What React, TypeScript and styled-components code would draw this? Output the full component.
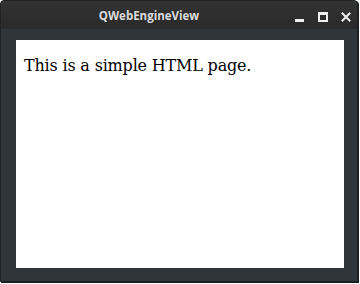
import React from 'react';
import styled, { createGlobalStyle } from 'styled-components';

const GlobalStyle = createGlobalStyle`
  html, body {
    margin: 0;
    padding: 0;
    background: #ffffff;
  }
`;

const Frame = styled.div`
  width: 360px;
  height: 284px;
  box-sizing: border-box;
  padding: 0 1px 1px 0;
  background: #ffffff;
`;

const Window = styled.div`
  width: 358px;
  height: 282px;
  box-sizing: border-box;
  display: flex;
  flex-direction: column;
  background: #2f3538;
  border: 1px solid #1f2224;
  border-radius: 4px 4px 0 0;
  box-shadow: 1px 1px 0 #1a1c1d;
  overflow: hidden;
`;

const TitleBar = styled.div`
  height: 27px;
  flex-shrink: 0;
  display: flex;
  align-items: center;
  background: linear-gradient(#333333, #2a2a2a);
  border-bottom: 1px solid #2b2e30;
  padding: 0 6px 0 0;
`;

const Title = styled.span`
  flex: 1;
  padding: 2px 0 0 2px;
  text-align: center;
  font-family: 'Open Sans', 'DejaVu Sans', sans-serif;
  font-weight: 700;
  font-size: 11.5px;
  color: #dcdcdc;
`;

const Controls = styled.div`
  display: flex;
  align-items: center;
  gap: 13px;
  margin-top: 4px;
`;

const ControlButton = styled.button`
  width: 10px;
  height: 10px;
  padding: 0;
  border: 0;
  background: none;
  display: flex;
  align-items: center;
  justify-content: center;
  color: #eeeeee;
`;

const Body = styled.div`
  flex: 1;
  display: flex;
  padding: 11px 13px 13px 15px;
`;

const WebView = styled.div`
  flex: 1;
  background: #ffffff;
  padding: 16px 8px 8px;
`;

const PageText = styled.p`
  margin: 0;
  font-family: 'DejaVu Serif', serif;
  font-size: 16px;
  line-height: 19px;
  letter-spacing: -0.18px;
  color: #000000;
`;

export default function App() {
  return (
    <>
      <GlobalStyle />
      <Frame>
        <Window>
          <TitleBar>
            <Title>QWebEngineView</Title>
            <Controls>
              <ControlButton aria-label="Minimize">
                <svg width="10" height="10" viewBox="0 0 10 10">
                  <rect x="0" y="7" width="9" height="3" fill="currentColor" />
                </svg>
              </ControlButton>
              <ControlButton aria-label="Maximize">
                <svg width="10" height="10" viewBox="0 0 10 10">
                  <path d="M0 0H10V10H0Z M2 3V8H8V3Z" fill="currentColor" fillRule="evenodd" />
                </svg>
              </ControlButton>
              <ControlButton aria-label="Close">
                <svg width="10" height="10" viewBox="0 0 10 10">
                  <path d="M1.5 1.5L8.5 8.5M8.5 1.5L1.5 8.5" stroke="currentColor" strokeWidth="2" strokeLinecap="square" />
                </svg>
              </ControlButton>
            </Controls>
          </TitleBar>
          <Body>
            <WebView>
              <PageText>This is a simple HTML page.</PageText>
            </WebView>
          </Body>
        </Window>
      </Frame>
    </>
  );
}
